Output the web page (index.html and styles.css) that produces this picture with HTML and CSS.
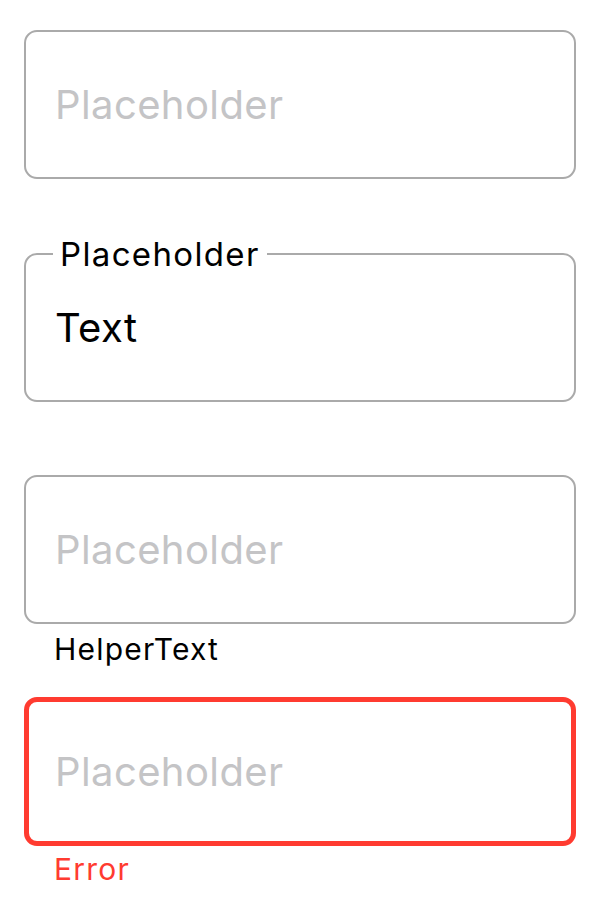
FILE: index.html
```html
<!DOCTYPE html>
<html lang="en">
<head>
<meta charset="utf-8">
<title>Text fields</title>
<link rel="stylesheet" href="styles.css">
</head>
<body>
<main class="form">
  <div class="field">
    <div class="box"><span class="value placeholder">Placeholder</span></div>
  </div>
  <div class="field">
    <div class="box box-labeled">
      <span class="label">Placeholder</span>
      <span class="value">Text</span>
    </div>
  </div>
  <div class="field">
    <div class="box"><span class="value placeholder">Placeholder</span></div>
    <div class="note">HelperText</div>
  </div>
  <div class="field">
    <div class="box box-error"><span class="value placeholder">Placeholder</span></div>
    <div class="note note-error">Error</div>
  </div>
</main>
</body>
</html>
```

FILE: styles.css
```css
html, body {
  margin: 0;
  padding: 0;
  background: #ffffff;
}

body {
  font-family: Inter, "Noto Sans", "Liberation Sans", sans-serif;
  color: #000000;
}

.form {
  display: flex;
  flex-direction: column;
  padding: 30px 24px 0 24px;
}

.field {
  height: 222px;
  display: flex;
  flex-direction: column;
}

.field:first-child {
  height: 223px;
}

.box {
  position: relative;
  box-sizing: border-box;
  height: 149px;
  border: 2px solid #aaaaaa;
  border-radius: 13px;
  display: flex;
  align-items: center;
  padding-left: 29px;
}

.box-error {
  border: 5px solid #ff3b30;
  padding-left: 26px;
}

.value {
  font-size: 40px;
  line-height: 48px;
  letter-spacing: 0.4px;
  color: #000000;
}

.placeholder {
  color: #c4c4c6;
}

.label {
  position: absolute;
  left: 27px;
  top: -21px;
  padding: 0 7px;
  background: #ffffff;
  font-size: 33px;
  line-height: 40px;
  letter-spacing: 1.35px;
  color: #000000;
}

.note {
  margin-top: 7px;
  padding-left: 30px;
  font-size: 30px;
  line-height: 36px;
  letter-spacing: 1.2px;
  color: #000000;
}

.note-error {
  margin-top: 5px;
  color: #ff3b30;
}
```
